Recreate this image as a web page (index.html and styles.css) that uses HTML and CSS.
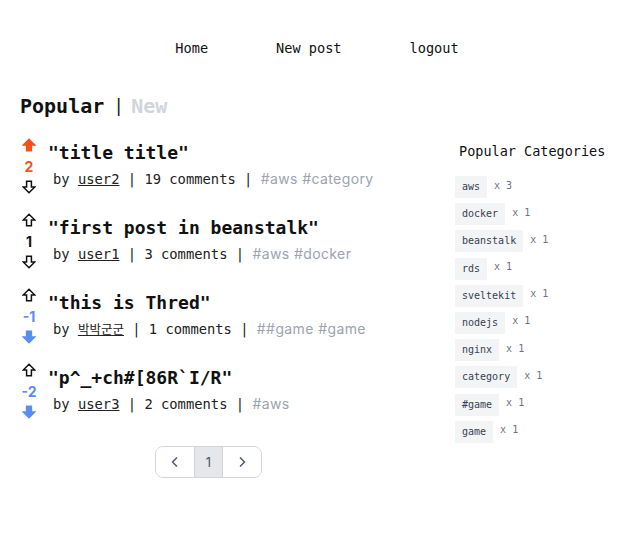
FILE: index.html
```html
<!DOCTYPE html>
<html lang="en">
<head>
<meta charset="utf-8">
<title>Board</title>
<link rel="stylesheet" href="styles.css">
</head>
<body>
<nav class="nav">
  <a class="nav-link" href="#">Home</a>
  <a class="nav-link" href="#">New post</a>
  <a class="nav-link" href="#">logout</a>
</nav>
<div class="layout">
  <main class="feed">
    <h1 class="tabs"><span class="tab-active">Popular</span><span class="tab-sep">|</span><span class="tab-idle">New</span></h1>

    <article class="post">
      <div class="vote">
        <svg class="arrow up-on" viewBox="0 0 14 14"><path d="M7 1.2 L12.8 7 H9.4 V12.8 H4.6 V7 H1.2 Z"/></svg>
        <span class="count count-up">2</span>
        <svg class="arrow down" viewBox="0 0 14 14"><path d="M7 12.8 L12.8 7 H9.4 V1.2 H4.6 V7 H1.2 Z"/></svg>
      </div>
      <div class="body">
        <h2 class="title">"title title"</h2>
        <p class="meta">by <a class="user" href="#">user2</a> | 19 comments | <span class="tags">#aws #category</span></p>
      </div>
    </article>

    <article class="post">
      <div class="vote">
        <svg class="arrow up" viewBox="0 0 14 14"><path d="M7 1.2 L12.8 7 H9.4 V12.8 H4.6 V7 H1.2 Z"/></svg>
        <span class="count">1</span>
        <svg class="arrow down" viewBox="0 0 14 14"><path d="M7 12.8 L12.8 7 H9.4 V1.2 H4.6 V7 H1.2 Z"/></svg>
      </div>
      <div class="body">
        <h2 class="title">"first post in beanstalk"</h2>
        <p class="meta">by <a class="user" href="#">user1</a> | 3 comments | <span class="tags">#aws #docker</span></p>
      </div>
    </article>

    <article class="post">
      <div class="vote">
        <svg class="arrow up" viewBox="0 0 14 14"><path d="M7 1.2 L12.8 7 H9.4 V12.8 H4.6 V7 H1.2 Z"/></svg>
        <span class="count count-down">-1</span>
        <svg class="arrow down-on" viewBox="0 0 14 14"><path d="M7 12.8 L12.8 7 H9.4 V1.2 H4.6 V7 H1.2 Z"/></svg>
      </div>
      <div class="body">
        <h2 class="title">"this is Thred"</h2>
        <p class="meta">by <a class="user user-kr" href="#">박박군군</a> | 1 comments | <span class="tags">##game #game</span></p>
      </div>
    </article>

    <article class="post">
      <div class="vote">
        <svg class="arrow up" viewBox="0 0 14 14"><path d="M7 1.2 L12.8 7 H9.4 V12.8 H4.6 V7 H1.2 Z"/></svg>
        <span class="count count-down">-2</span>
        <svg class="arrow down-on" viewBox="0 0 14 14"><path d="M7 12.8 L12.8 7 H9.4 V1.2 H4.6 V7 H1.2 Z"/></svg>
      </div>
      <div class="body">
        <h2 class="title">"p^_+ch#[86R`I/R"</h2>
        <p class="meta">by <a class="user" href="#">user3</a> | 2 comments | <span class="tags">#aws</span></p>
      </div>
    </article>

    <div class="pager-wrap">
      <div class="pager">
        <button class="pg pg-arrow" aria-label="previous"><svg viewBox="0 0 12 12"><path d="M8 1.5 L3.5 6 L8 10.5"/></svg></button>
        <button class="pg pg-num">1</button>
        <button class="pg pg-arrow" aria-label="next"><svg viewBox="0 0 12 12"><path d="M4 1.5 L8.5 6 L4 10.5"/></svg></button>
      </div>
    </div>
  </main>

  <aside class="side">
    <h3 class="side-title">Popular Categories</h3>
    <ul class="cats">
      <li class="cat"><span class="chip">aws</span><span class="num">x 3</span></li>
      <li class="cat"><span class="chip">docker</span><span class="num">x 1</span></li>
      <li class="cat"><span class="chip">beanstalk</span><span class="num">x 1</span></li>
      <li class="cat"><span class="chip">rds</span><span class="num">x 1</span></li>
      <li class="cat"><span class="chip">sveltekit</span><span class="num">x 1</span></li>
      <li class="cat"><span class="chip">nodejs</span><span class="num">x 1</span></li>
      <li class="cat"><span class="chip">nginx</span><span class="num">x 1</span></li>
      <li class="cat"><span class="chip">category</span><span class="num">x 1</span></li>
      <li class="cat"><span class="chip">#game</span><span class="num">x 1</span></li>
      <li class="cat"><span class="chip">game</span><span class="num">x 1</span></li>
    </ul>
  </aside>
</div>
</body>
</html>
```

FILE: styles.css
```css
* { box-sizing: border-box; }

body {
  margin: 0;
  background: #ffffff;
  color: #111111;
  font-family: "DejaVu Sans Mono", "Liberation Mono", "Noto Sans CJK KR", monospace;
}

.nav {
  display: flex;
  justify-content: center;
  gap: 68px;
  padding-top: 38px;
}

.nav-link {
  color: #111111;
  text-decoration: none;
  font-size: 13.6px;
  line-height: 20px;
}

.layout {
  display: flex;
  gap: 58px;
  padding: 0 20px;
  margin-top: 34px;
}

.feed {
  width: 377px;
  flex: none;
}

.tabs {
  margin: 0 0 18px;
  font-size: 20px;
  line-height: 28px;
  font-weight: 700;
  display: flex;
  align-items: center;
}

.tab-active { color: #111111; }

.tab-sep {
  font-weight: 400;
  font-size: 18px;
  margin: 0 7px 0 9px;
  color: #222222;
}

.tab-idle { color: #d1d5db; }

.post {
  display: flex;
  align-items: flex-start;
  margin-bottom: 19px;
}

.vote {
  width: 16px;
  flex: none;
  display: flex;
  flex-direction: column;
  align-items: center;
  margin-left: 1px;
}

.arrow {
  width: 14px;
  height: 14px;
  display: block;
}

.arrow path {
  stroke-width: 1.5;
  stroke-linejoin: miter;
}

.up path, .down path {
  fill: none;
  stroke: #111111;
}

.up-on path {
  fill: #f4511e;
  stroke: #f4511e;
}

.down-on path {
  fill: #5b8def;
  stroke: #5b8def;
}

.count {
  font-family: "Inter", "Liberation Sans", sans-serif;
  font-weight: 700;
  font-size: 14px;
  line-height: 18px;
  margin: 6px 0 4px;
  color: #111111;
}

.count-up { color: #f4511e; }
.count-down { color: #5b8def; }

.body {
  margin-left: 11px;
  padding-top: 4px;
  min-width: 0;
}

.title {
  margin: 0;
  font-size: 18px;
  line-height: 22px;
  font-weight: 700;
  white-space: nowrap;
}

.meta {
  margin: 5px 0 0;
  padding-left: 5px;
  font-size: 13.8px;
  line-height: 20px;
  color: #222222;
  white-space: nowrap;
}

.user {
  color: #222222;
  text-decoration: underline;
}

.user-kr {
  font-family: "Noto Sans CJK KR", sans-serif;
  font-size: 12.5px;
}

.tags {
  color: #9ca3af;
  font-family: "Inter", "Liberation Sans", sans-serif;
  font-size: 14px;
  letter-spacing: 0.4px;
}

.pager-wrap {
  display: flex;
  justify-content: center;
  margin-top: 27px;
}

.pager {
  display: flex;
  border: 1px solid #d1d5db;
  border-radius: 8px;
  overflow: hidden;
  height: 32px;
}

.pg {
  border: none;
  margin: 0;
  padding: 0;
  background: #ffffff;
  display: flex;
  align-items: center;
  justify-content: center;
  font-family: "Inter", "Liberation Sans", sans-serif;
  font-size: 13px;
  color: #4b5563;
}

.pg-arrow {
  width: 38px;
}

.pg-arrow svg {
  width: 12px;
  height: 12px;
}

.pg-arrow path {
  fill: none;
  stroke: #4b5563;
  stroke-width: 1.4;
}

.pg-num {
  width: 29px;
  background: #e5e7eb;
  border-left: 1px solid #d1d5db;
  border-right: 1px solid #d1d5db;
}

.side {
  flex: 1;
  padding-top: 49px;
}

.side-title {
  margin: 0 0 15px 4px;
  font-size: 13.5px;
  line-height: 20px;
  font-weight: 400;
  color: #111111;
}

.cats {
  list-style: none;
  margin: 0;
  padding: 0;
  display: flex;
  flex-direction: column;
  gap: 5.2px;
}

.cat {
  display: flex;
  align-items: center;
  gap: 7px;
}

.chip {
  background: #f3f4f6;
  color: #374151;
  font-size: 10px;
  line-height: 22px;
  height: 22px;
  padding: 0 7px;
}

.num {
  color: #6b7280;
  font-size: 10px;
  margin-top: -4px;
}
```
